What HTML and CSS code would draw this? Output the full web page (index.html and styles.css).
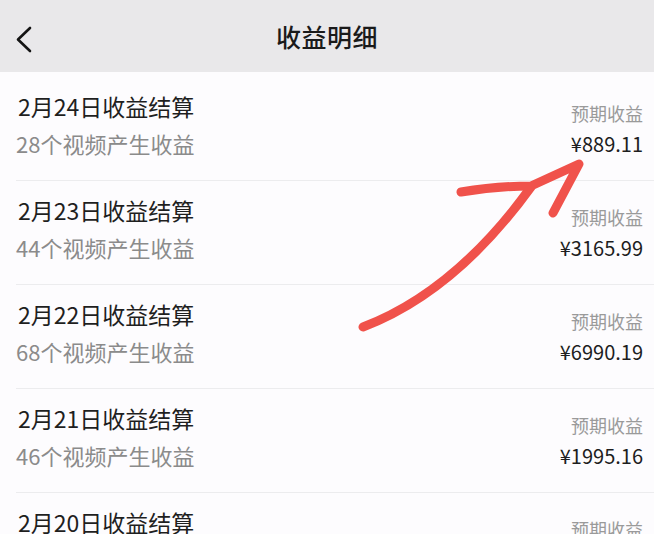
FILE: index.html
```html
<!DOCTYPE html>
<html lang="zh-CN">
<head>
<meta charset="utf-8">
<title>收益明细</title>
<link rel="stylesheet" href="styles.css">
</head>
<body>
<div class="page">
  <header class="nav">
    <span class="back">
      <svg width="20" height="30" viewBox="0 0 20 30"><polyline points="15,4 3,15.5 15,27" fill="none" stroke="#141414" stroke-width="2.6" stroke-linecap="round" stroke-linejoin="round"/></svg>
    </span>
    <h1 class="title">收益明细</h1>
  </header>
  <ul class="list">
    <li class="row">
      <div class="left"><div class="name">2月24日收益结算</div><div class="sub">28个视频产生收益</div></div>
      <div class="right"><div class="label">预期收益</div><div class="amount">¥889.11</div></div>
    </li>
    <li class="row">
      <div class="left"><div class="name">2月23日收益结算</div><div class="sub">44个视频产生收益</div></div>
      <div class="right"><div class="label">预期收益</div><div class="amount">¥3165.99</div></div>
    </li>
    <li class="row">
      <div class="left"><div class="name">2月22日收益结算</div><div class="sub">68个视频产生收益</div></div>
      <div class="right"><div class="label">预期收益</div><div class="amount">¥6990.19</div></div>
    </li>
    <li class="row">
      <div class="left"><div class="name">2月21日收益结算</div><div class="sub">46个视频产生收益</div></div>
      <div class="right"><div class="label">预期收益</div><div class="amount">¥1995.16</div></div>
    </li>
    <li class="row">
      <div class="left"><div class="name">2月20日收益结算</div></div>
      <div class="right"><div class="label">预期收益</div></div>
    </li>
  </ul>
  <svg class="arrow" width="654" height="534" viewBox="0 0 654 534">
    <g fill="none" stroke="#f0524b" stroke-width="9" stroke-linecap="round" stroke-linejoin="round">
      <path d="M363,327 Q455,292 531,187"/>
      <path d="M461,192 Q498,186 531,186 L579,164 L553,213"/>
    </g>
  </svg>
</div>
</body>
</html>
```
FILE: styles.css
```css
* { box-sizing: border-box; margin: 0; padding: 0; }
html, body { width: 654px; height: 534px; overflow: hidden; }
body {
  background: #fdfcfe;
  font-family: "Noto Sans CJK SC", "Noto Sans", sans-serif;
  color: #1e1e1e;
}
.page { position: relative; width: 654px; height: 534px; overflow: hidden; }
.nav {
  height: 72px;
  background: #e9e8ea;
  display: flex;
  align-items: center;
  justify-content: center;
  position: relative;
}
.back {
  position: absolute;
  left: 15px;
  top: 24px;
  width: 20px;
  height: 30px;
  display: flex;
}
.title {
  font-size: 25px;
  font-weight: 500;
  color: #1a1a1a;
  letter-spacing: 0.5px;
}
.list { list-style: none; padding-top: 5px; }
.row {
  height: 104px;
  margin-left: 16px;
  padding: 15px 11px 0 2px;
  border-bottom: 1px solid #ececee;
  display: flex;
  justify-content: space-between;
  align-items: flex-start;
}
.left { display: flex; flex-direction: column; gap: 8px; }
.name { font-size: 23px; line-height: 28px; color: #1f1f1f; }
.sub { font-size: 22px; line-height: 30px; color: #8b8b8b; margin-left: -2px; }
.right { display: flex; flex-direction: column; align-items: flex-end; gap: 4px; padding-top: 8px; }
.label { font-size: 18px; line-height: 26px; color: #9a9a9a; }
.amount { font-size: 20px; line-height: 28px; color: #1e1e1e; }
.arrow { position: absolute; left: 0; top: 0; pointer-events: none; }
```
